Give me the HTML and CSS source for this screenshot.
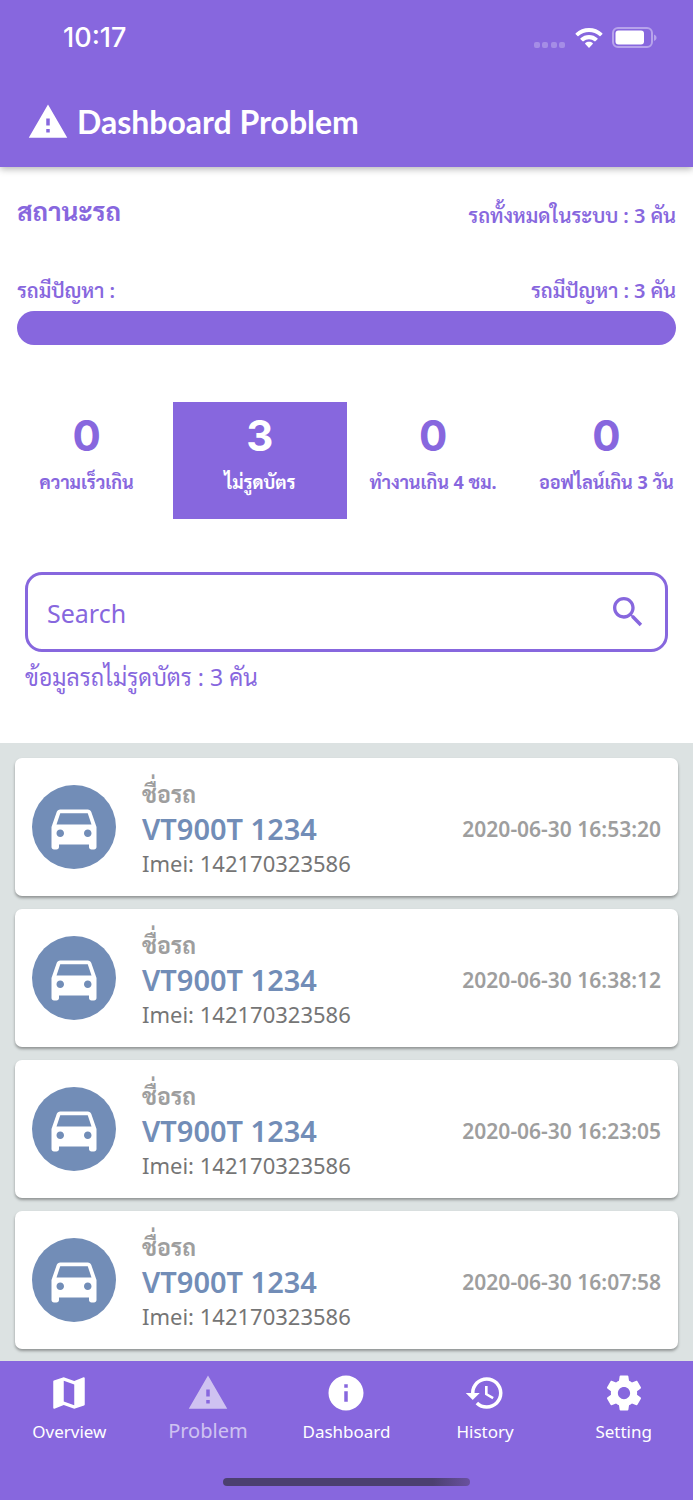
FILE: index.html
```html
<!DOCTYPE html>
<html lang="th">
<head>
<meta charset="utf-8">
<meta name="viewport" content="width=device-width, initial-scale=1">
<title>Dashboard Problem</title>
<link rel="stylesheet" href="styles.css">
</head>
<body>
<svg class="defs" aria-hidden="true">
  <symbol id="warning" viewBox="0 0 24 24"><path d="M1 21h22L12 2 1 21zm12-3h-2v-2h2v2zm0-4h-2v-4h2v4z"/></symbol>
  <symbol id="map" viewBox="0 0 24 24"><path d="M20.500 3l-.16.03L15 5.100 9 3 3.360 4.900c-.21.070-.36.250-.36.480V20.500c0 .280.220.500.500.500l.16-.03L9 18.900l6 2.100 5.640-1.900c.21-.07.36-.25.36-.48V3.500c0-.28-.22-.5-.5-.5zM15 19l-6-2.110V5l6 2.110V19z"/></symbol>
  <symbol id="info" viewBox="0 0 24 24"><path d="M12 2C6.480 2 2 6.480 2 12s4.480 10 10 10 10-4.480 10-10S17.520 2 12 2zm1 15h-2v-6h2v6zm0-8h-2V7h2v2z"/></symbol>
  <symbol id="history" viewBox="0 0 24 24"><path d="M13 3c-4.970 0-9 4.030-9 9H1l3.890 3.890.07.14L9 12H6c0-3.870 3.130-7 7-7s7 3.130 7 7-3.130 7-7 7c-1.930 0-3.680-.79-4.940-2.060l-1.420 1.420C8.270 19.990 10.510 21 13 21c4.970 0 9-4.030 9-9s-4.030-9-9-9zm-1 5v5l4.280 2.540.72-1.210-3.500-2.080V8H12z"/></symbol>
  <symbol id="settings" viewBox="0 0 24 24"><path d="M19.430 12.980c.04-.32.07-.64.07-.98s-.03-.66-.07-.98l2.110-1.650c.19-.15.24-.42.12-.64l-2-3.460c-.12-.22-.39-.3-.61-.22l-2.490 1c-.52-.4-1.080-.73-1.690-.98l-.38-2.650C14.460 2.180 14.250 2 14 2h-4c-.25 0-.46.18-.49.42l-.38 2.650c-.61.25-1.170.59-1.690.98l-2.490-1c-.23-.09-.49 0-.61.22l-2 3.460c-.13.22-.07.49.12.64l2.110 1.650c-.04.32-.07.65-.07.98s.03.66.07.98l-2.110 1.650c-.19.15-.24.42-.12.64l2 3.460c.12.22.39.3.61.22l2.490-1c.52.4 1.080.73 1.690.98l.38 2.650c.03.24.24.42.49.42h4c.25 0 .46-.18.49-.42l.38-2.650c.61-.25 1.170-.59 1.690-.98l2.490 1c.23.09.49 0 .61-.22l2-3.460c.12-.22.07-.49-.12-.64l-2.110-1.650zM12 15.500c-1.930 0-3.500-1.570-3.500-3.500s1.570-3.500 3.500-3.500 3.500 1.570 3.500 3.500-1.570 3.500-3.500 3.500z"/></symbol>
  <symbol id="search" viewBox="0 0 24 24"><path d="M15.500 14h-.79l-.28-.27C15.410 12.590 16 11.110 16 9.500 16 5.910 13.090 3 9.500 3S3 5.910 3 9.500 5.910 16 9.500 16c1.610 0 3.090-.59 4.230-1.570l.27.28v.79l5 4.990L20.490 19l-4.990-5zm-6 0C7.010 14 5 11.990 5 9.500S7.010 5 9.500 5 14 7.010 14 9.500 11.990 14 9.500 14z"/></symbol>
  <symbol id="car" viewBox="0 0 24 24"><path d="M18.920 6.010C18.720 5.420 18.160 5 17.500 5h-11c-.66 0-1.210.42-1.420 1.010L3 12v8c0 .55.45 1 1 1h1c.55 0 1-.45 1-1v-1h12v1c0 .55.45 1 1 1h1c.55 0 1-.45 1-1v-8l-2.080-5.990zM6.500 16c-.83 0-1.500-.67-1.500-1.500S5.670 13 6.500 13s1.500.67 1.500 1.500S7.330 16 6.500 16zm11 0c-.83 0-1.500-.67-1.500-1.500s.67-1.500 1.500-1.500 1.500.67 1.500 1.500-.67 1.500-1.500 1.500zM5 11l1.500-4.500h11L19 11H5z"/></symbol>
</svg>

<header class="app-header">
  <div class="status-bar">
    <span class="clock">10:17</span>
    <div class="indicators">
      <svg class="signal" viewBox="0 0 32 7" aria-hidden="true"><rect x="0" y="0" width="6" height="6" rx="2"/><rect x="8" y="0" width="6" height="6" rx="2"/><rect x="17" y="0" width="6" height="6" rx="2"/><rect x="25" y="0" width="6" height="6" rx="2"/></svg>
      <svg class="wifi" viewBox="0 0 28 20" aria-hidden="true"><path d="M14 0C9 0 4.300 1.900.7 5.200c-.3.300-.3.700 0 1l1.800 1.800c.3.300.7.300 1 0C6.400 5.400 10.100 4 14 4s7.600 1.400 10.500 4c.3.300.7.300 1 0l1.800-1.800c.3-.3.300-.7 0-1C23.700 1.900 19 0 14 0z"/><path d="M14 7c-3.200 0-6.200 1.200-8.500 3.300-.3.300-.3.700 0 1l2.100 2c.3.200.6.200.9 0C10 12 11.900 11.200 14 11.200s4 .8 5.500 2.100c.3.200.6.200.9 0l2.100-2c.3-.3.300-.7 0-1C20.200 8.200 17.200 7 14 7z"/><path d="M14 13.800c-1.400 0-2.700.5-3.700 1.300-.3.300-.3.700 0 1l3.200 3.400c.3.300.7.300 1 0l3.200-3.400c.3-.3.300-.7 0-1-1-.8-2.300-1.300-3.700-1.300z"/></svg>
      <svg class="battery" viewBox="0 0 45 22" aria-hidden="true"><rect class="shell" x="1" y="1" width="39" height="19" rx="5"/><rect x="3.500" y="3.500" width="28.500" height="14" rx="3"/><path class="tip" d="M42 7.500v6.500c2-.8 2.500-2 2.500-3.200S44 8.200 42 7.500z"/></svg>
    </div>
  </div>
  <div class="title-row">
    <svg class="icon" aria-hidden="true"><use href="#warning"/></svg>
    <h1>Dashboard Problem</h1>
  </div>
</header>

<main>
  <section class="summary">
    <div class="summary-row">
      <h2>สถานะรถ</h2>
      <p>รถทั้งหมดในระบบ : 3 คัน</p>
    </div>
    <div class="summary-row">
      <p id="issue-label">รถมีปัญหา :</p>
      <p>รถมีปัญหา : 3 คัน</p>
    </div>
    <div class="bar" role="progressbar" aria-labelledby="issue-label" aria-valuemin="0" aria-valuemax="3" aria-valuenow="3"></div>
  </section>

  <div class="filters">
    <button class="filter" type="button"><span class="count">0</span><span>ความเร็วเกิน</span></button>
    <button class="filter active" type="button"><span class="count">3</span><span>ไม่รูดบัตร</span></button>
    <button class="filter" type="button"><span class="count">0</span><span>ทำงานเกิน 4 ชม.</span></button>
    <button class="filter" type="button"><span class="count">0</span><span>ออฟไลน์เกิน 3 วัน</span></button>
  </div>

  <section class="search-area">
    <div class="search-box">
      <input type="text" placeholder="Search" aria-label="Search">
      <button type="button" aria-label="Search"><svg class="icon" aria-hidden="true"><use href="#search"/></svg></button>
    </div>
    <p class="result">ข้อมูลรถไม่รูดบัตร : 3 คัน</p>
  </section>

  <section class="vehicles">
    <article class="card">
      <div class="avatar"><svg aria-hidden="true"><use href="#car"/></svg></div>
      <div class="details"><p class="label">ชื่อรถ</p><h3>VT900T 1234</h3><p class="imei">Imei: 142170323586</p></div>
      <time>2020-06-30 16:53:20</time>
    </article>
    <article class="card">
      <div class="avatar"><svg aria-hidden="true"><use href="#car"/></svg></div>
      <div class="details"><p class="label">ชื่อรถ</p><h3>VT900T 1234</h3><p class="imei">Imei: 142170323586</p></div>
      <time>2020-06-30 16:38:12</time>
    </article>
    <article class="card">
      <div class="avatar"><svg aria-hidden="true"><use href="#car"/></svg></div>
      <div class="details"><p class="label">ชื่อรถ</p><h3>VT900T 1234</h3><p class="imei">Imei: 142170323586</p></div>
      <time>2020-06-30 16:23:05</time>
    </article>
    <article class="card">
      <div class="avatar"><svg aria-hidden="true"><use href="#car"/></svg></div>
      <div class="details"><p class="label">ชื่อรถ</p><h3>VT900T 1234</h3><p class="imei">Imei: 142170323586</p></div>
      <time>2020-06-30 16:07:58</time>
    </article>
  </section>
</main>

<footer class="bottom">
  <nav>
    <a href="#"><svg class="icon" aria-hidden="true"><use href="#map"/></svg><span>Overview</span></a>
    <a href="#" class="current" aria-current="page"><svg class="icon" aria-hidden="true"><use href="#warning"/></svg><span>Problem</span></a>
    <a href="#"><svg class="icon" aria-hidden="true"><use href="#info"/></svg><span>Dashboard</span></a>
    <a href="#"><svg class="icon" aria-hidden="true"><use href="#history"/></svg><span>History</span></a>
    <a href="#"><svg class="icon" aria-hidden="true"><use href="#settings"/></svg><span>Setting</span></a>
  </nav>
  <div class="home-indicator"></div>
</footer>
</body>
</html>
```

FILE: styles.css
```css
:root {
  --purple: #8767de;
  --blue: #728db7;
  --grey: #9e9e9e;
}

* { box-sizing: border-box; }

body {
  margin: 0;
  min-height: 100vh;
  display: flex;
  flex-direction: column;
  background: #fff;
  color: var(--purple);
  font-family: "Noto Sans", Sarabun, "Noto Sans Thai Looped", Loma, Garuda, "Noto Sans Thai", sans-serif;
}

h1, h2, h3, p { margin: 0; }

button, input { font: inherit; color: inherit; }

.defs { display: none; }

.icon {
  width: 42px;
  height: 42px;
  flex: none;
  fill: currentColor;
}

.app-header {
  position: relative;
  height: 167px;
  background: var(--purple);
  color: #fff;
  box-shadow: 0 2px 7px rgba(0, 0, 0, 0.3);
}

.status-bar {
  display: flex;
  justify-content: space-between;
  align-items: center;
  height: 76px;
  padding: 0 36px 0 63px;
}

.clock {
  font: 500 27px/34px Inter, sans-serif;
}

.indicators {
  display: flex;
  align-items: center;
  gap: 9px;
  fill: #fff;
}

.signal { width: 32px; height: 7px; opacity: 0.25; align-self: flex-end; }
.wifi { width: 28px; height: 20px; }
.battery { width: 45px; height: 22px; }
.shell { fill: none; stroke: #fff; stroke-width: 2; opacity: 0.4; }
.tip { opacity: 0.4; }

.title-row {
  display: flex;
  align-items: center;
  gap: 8px;
  height: 91px;
  padding: 0 27px;
}

h1 {
  font: 700 32px/44px Lato, sans-serif;
}

main {
  flex: 1;
  display: flex;
  flex-direction: column;
}

.summary {
  padding: 25px 17px 0;
  font-size: 20px;
  font-weight: 600;
  line-height: 32px;
}

.summary-row {
  display: flex;
  justify-content: space-between;
  align-items: flex-end;
  height: 40px;
}

.summary-row + .summary-row { margin-top: 35px; }

h2 { font-size: 26px; line-height: 42px; font-weight: 700; }

.bar {
  height: 34px;
  margin-top: 4px;
  border-radius: 17px;
  background: var(--purple);
}

.filters {
  display: grid;
  grid-template-columns: repeat(4, 1fr);
  margin-top: 57px;
}

.filter {
  display: flex;
  flex-direction: column;
  align-items: center;
  height: 117px;
  padding: 10px 0 0;
  border: 0;
  background: none;
  font-size: 18px;
  line-height: 28px;
  font-weight: 700;
  white-space: nowrap;
}

.filter.active { background: var(--purple); color: #fff; }

.count {
  margin-bottom: 8px;
  font: 700 42px/48px Inter, sans-serif;
}

.search-area { padding: 53px 25px 49px; }

.search-box {
  display: flex;
  align-items: center;
  height: 80px;
  padding: 0 17px 0 19px;
  border: 3px solid var(--purple);
  border-radius: 17px;
}

.search-box input {
  flex: 1;
  min-width: 0;
  padding: 2px 0 0;
  border: 0;
  outline: 0;
  background: none;
  font-size: 25px;
}

.search-box input::placeholder { color: inherit; opacity: 1; }

.search-box button {
  display: flex;
  padding: 0;
  border: 0;
  background: none;
}

.search-box .icon { width: 40px; height: 40px; }

.result { margin-top: 8px; font-size: 23px; line-height: 34px; }

.vehicles {
  flex: 1;
  display: flex;
  flex-direction: column;
  gap: 13px;
  padding: 15px 15px 12px;
  background: #dce2e2;
}

.card {
  display: flex;
  align-items: center;
  height: 138px;
  padding: 0 17px;
  border-radius: 7px;
  background: #fff;
  box-shadow: 0 2px 3px rgba(0, 0, 0, 0.35);
}

.avatar {
  display: flex;
  align-items: center;
  justify-content: center;
  width: 84px;
  height: 84px;
  border-radius: 50%;
  background: var(--blue);
}

.avatar svg { width: 60px; height: 60px; fill: #fff; }

.details { flex: 1; margin-left: 26px; padding-top: 2px; white-space: nowrap; }

.label { font-size: 23px; line-height: 36px; font-weight: 700; color: var(--grey); }

h3 { font-size: 29px; line-height: 34px; font-weight: 600; color: var(--blue); }

.imei { font-size: 22px; line-height: 34px; color: #757575; }

time { padding-top: 3px; font-size: 21px; font-weight: 600; color: var(--grey); white-space: nowrap; }

.bottom {
  position: sticky;
  bottom: 0;
  background: var(--purple);
  color: #fff;
}

nav {
  display: grid;
  grid-template-columns: repeat(5, 1fr);
  height: 117px;
}

nav a {
  display: flex;
  flex-direction: column;
  align-items: center;
  gap: 4px;
  padding-top: 11px;
  color: inherit;
  text-decoration: none;
  font-size: 17px;
  line-height: 28px;
}

nav .current { gap: 3px; opacity: 0.6; font-size: 20px; }

.home-indicator {
  width: 247px;
  height: 8px;
  margin: 0 auto 14px;
  border-radius: 4px;
  background: linear-gradient(90deg, #4c4070 85%, #69519f);
}
```
